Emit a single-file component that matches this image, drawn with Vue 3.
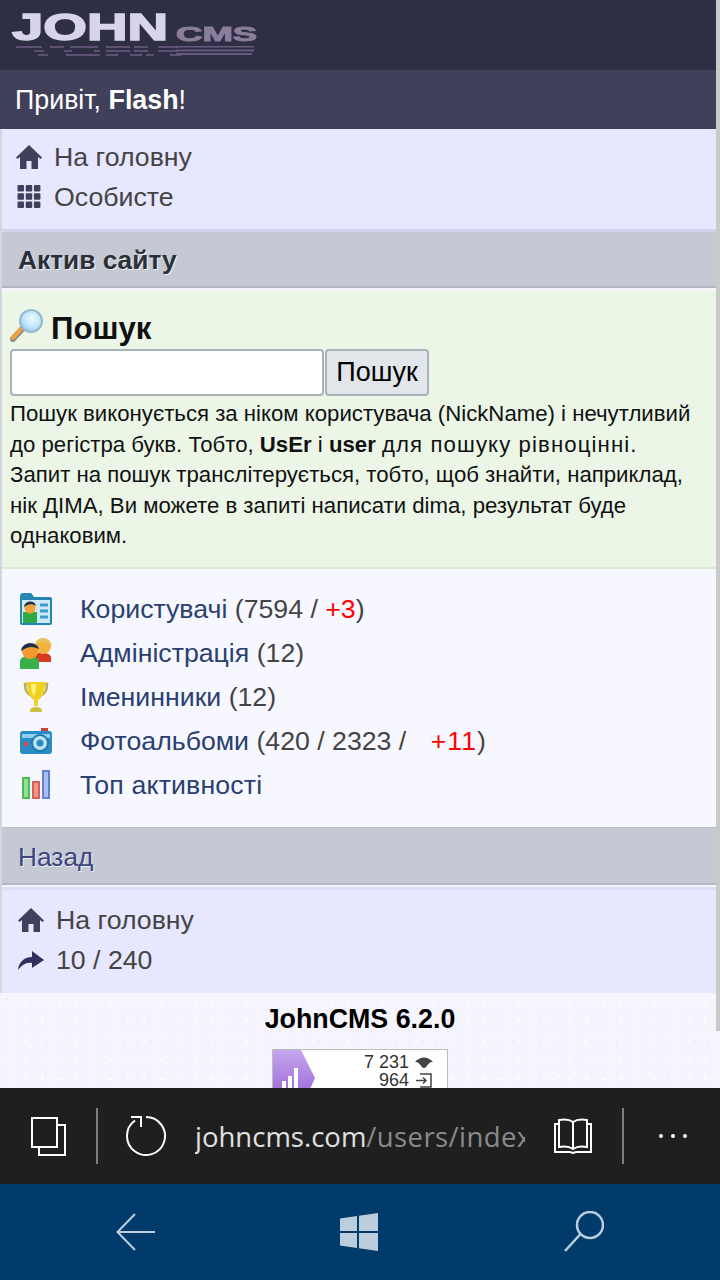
<template>
  <div class="screen">
    <div class="page">
      <div class="scroll-thumb"></div>
      <div class="logo-bar">
        <div class="logo">
          <div class="logo-words">
            <span class="logo-john">JOHN</span>
            <span class="logo-cms">CMS</span>
          </div>
          <svg class="logo-echo" width="246" height="12" viewBox="0 0 246 12">
            <g stroke="#5c5172" stroke-width="2">
              <path d="M4 1H30M38 1H52M58 1H86M94 1H118M122 1H136M146 1H166" />
              <path d="M22 5H32M52 5H60M82 5H88M94 5H118M122 5H136M146 5H166" />
              <path d="M26 9H36M54 9H88M94 9H106M118 9H130M134 9H142M158 9H170" />
            </g>
            <g stroke="#67597f" stroke-width="2">
              <path d="M164 0.500H242M164 4.500H242M164 8H240" />
            </g>
          </svg>
        </div>
      </div>
      <div class="hello">Привіт, <b>Flash</b>!</div>

      <div class="content">
        <div class="menu top-menu">
          <div class="menu-row">
            <svg class="ico" width="28" height="26" viewBox="0 0 28 26">
              <path fill="#40405a" d="M14 1 1 13.500 2.500 15 5 13V25H11.500V17H16.500V25H23V13L25.500 15 27 13.500Z" />
            </svg>
            <span>На головну</span>
          </div>
          <div class="menu-row">
            <svg class="ico" width="28" height="26" viewBox="0 0 28 26">
              <g fill="#40405a">
                <rect v-for="c in gridCells" :key="c.k" :x="c.x" :y="c.y" width="6.500" height="6.500" rx="1" />
              </g>
            </svg>
            <span>Особисте</span>
          </div>
        </div>

        <div class="title-bar"><b>Актив сайту</b></div>

        <div class="search-box">
          <div class="search-head">
            <svg class="soft lens-ico" width="34" height="34" viewBox="0 0 34 34">
              <defs>
                <radialGradient id="lens" cx="0.55" cy="0.4" r="0.7">
                  <stop offset="0" stop-color="#eefcff" />
                  <stop offset="0.6" stop-color="#b8e4fb" />
                  <stop offset="1" stop-color="#7cbce0" />
                </radialGradient>
              </defs>
              <path d="M3 31 13 20" stroke="#8a8a8a" stroke-width="6" stroke-linecap="round" />
              <path d="M3 30 11 21" stroke="#f0a040" stroke-width="4" stroke-linecap="round" />
              <circle cx="21" cy="13" r="11" fill="url(#lens)" stroke="#9ab8c8" stroke-width="2" />
            </svg>
            <b class="search-title">Пошук</b>
          </div>
          <form class="search-form" @submit.prevent>
            <input class="search-input" type="text" />
            <button class="search-btn" type="submit">Пошук</button>
          </form>
          <p class="search-help">
            Пошук виконується за ніком користувача (NickName) і нечутливий до регістра букв. Тобто, <b>UsEr</b> і <b>user</b> <span class="wide">для пошуку рівноцінні.</span><br />
            Запит на пошук транслітерується, тобто, щоб знайти, наприклад, нік ДІМА, Ви можете в запиті написати dima, результат буде однаковим.
          </p>
        </div>

        <div class="links">
          <div class="link-row">
            <svg class="soft" width="32" height="32" viewBox="0 0 32 32">
              <path fill="#2585b4" d="M0 3C0 1 1 0 3 0H11L14 4H30C31 4 32 5 32 6V30C32 31 31 32 30 32H2C1 32 0 31 0 30Z" />
              <rect x="2" y="7" width="28" height="23" fill="#cfe9f6" />
              <rect x="3" y="19" width="14" height="11" fill="#2fa846" />
              <circle cx="10" cy="15" r="5.500" fill="#f2a33a" />
              <path fill="#1e3350" d="M4 14C5 7 15 7 16 13 12 10 8 11 4 14Z" />
              <path stroke="#3f9ccc" stroke-width="3" d="M20 12H28M20 18H28M20 24H28" />
            </svg>
            <span><a class="lnk">Користувачі</a> (7594 / <span class="plus">+3</span>)</span>
          </div>
          <div class="link-row">
            <svg class="soft" width="32" height="32" viewBox="0 0 32 32">
              <path fill="#d83a20" d="M14 20C15 14 29 14 31 20V25H14Z" />
              <circle cx="23" cy="9" r="8" fill="#f2b23e" />
              <path fill="#ecc25a" d="M15 8C17 -1 29 -1 32 8 26 4 21 4 15 8Z" />
              <path fill="#36b048" d="M0 24C1 17 17 17 19 24V32H0Z" />
              <circle cx="10" cy="14" r="8" fill="#f29a2e" />
              <path fill="#1b2f55" d="M1 14C2 4 17 4 19 12 13 9 8 9 1 14Z" />
            </svg>
            <span><a class="lnk">Адміністрація</a> (12)</span>
          </div>
          <div class="link-row">
            <svg class="soft" width="32" height="32" viewBox="0 0 32 32">
              <path fill="none" stroke="#b8b060" stroke-width="2.500" d="M9 3H5C5 10 7 13 11 14M23 3H27C27 10 25 13 21 14" />
              <path fill="#f0d020" d="M7 1H25C25 11 22 17 18 19V25H14V19C10 17 7 11 7 1Z" />
              <path fill="#fff27a" d="M11 3H16C16 10 15 13 14 15 12 12 11 9 11 3Z" />
              <path fill="#d0c040" d="M10 29C11 25 21 25 22 29V31H10Z" />
            </svg>
            <span><a class="lnk">Іменинники</a> (12)</span>
          </div>
          <div class="link-row">
            <svg class="soft" width="32" height="32" viewBox="0 0 32 32">
              <rect x="21" y="3" width="7" height="4" fill="#c84040" />
              <rect x="0" y="6" width="32" height="23" rx="3" fill="#2a8cc4" />
              <rect x="2" y="9" width="28" height="4" fill="#8fd0ef" />
              <circle cx="20" cy="18" r="8" fill="#bfe4f6" stroke="#1e78aa" stroke-width="2" />
              <circle cx="20" cy="18" r="3.500" fill="#2a8cc4" />
              <rect x="4" y="17" width="4" height="4" fill="#e04848" />
            </svg>
            <span><a class="lnk">Фотоальбоми</a> (420 / 2323 / <span class="plus gap">+11</span>)</span>
          </div>
          <div class="link-row">
            <svg class="soft" width="32" height="32" viewBox="0 0 32 32">
              <rect x="3" y="9" width="6" height="20" fill="#92e092" stroke="#50b858" stroke-width="2" />
              <rect x="13" y="13" width="6" height="16" fill="#f0958a" stroke="#d86058" stroke-width="2" />
              <rect x="23" y="2" width="6" height="27" fill="#a8bef4" stroke="#6080d8" stroke-width="2" />
            </svg>
            <span class="lnk top-link">Топ активності</span>
          </div>
        </div>

        <div class="title-bar back-bar"><a class="back-link">Назад</a></div>

        <div class="menu bottom-menu">
          <div class="menu-row">
            <svg class="ico" width="28" height="26" viewBox="0 0 28 26">
              <path fill="#40405a" d="M14 1 1 13.500 2.500 15 5 13V25H11.500V17H16.500V25H23V13L25.500 15 27 13.500Z" />
            </svg>
            <span>На головну</span>
          </div>
          <div class="menu-row">
            <svg class="ico soft" width="28" height="26" viewBox="0 0 28 26">
              <path fill="#30305c" d="M1 23C2 14 8 10 15 10V4L27 13 15 21V16C9 15 5 18 1 23Z" />
            </svg>
            <span>10 / 240</span>
          </div>
        </div>
      </div>

      <div class="foot">
        <b class="foot-name">JohnCMS 6.2.0</b>
        <div class="counter">
          <svg class="counter-badge" width="44" height="39" viewBox="0 0 44 39">
            <defs>
              <linearGradient id="badge" x1="0" y1="0" x2="0" y2="1">
                <stop offset="0" stop-color="#c7a5f0" />
                <stop offset="1" stop-color="#a274da" />
              </linearGradient>
            </defs>
            <path fill="url(#badge)" d="M0 0H28L42 28 37 39H0Z" />
            <path fill="#fff" d="M9 39H13V31H9ZM15 39H19V26H15ZM21 39H25V18H21Z" />
          </svg>
          <div class="counter-nums">
            <div class="counter-row">
              <span>7 231</span>
              <svg width="18" height="12" viewBox="0 0 18 12">
                <path fill="#444" d="M0 6C5 0 13 0 18 6 13 5 12 12 9 12 6 12 5 5 0 6Z" />
              </svg>
            </div>
            <div class="counter-row">
              <span>964</span>
              <svg width="18" height="15" viewBox="0 0 18 15">
                <path fill="none" stroke="#444" stroke-width="1.500" d="M5 1H16V14H5M1 7.500H11M8 4.500 11 7.500 8 10.500" />
              </svg>
            </div>
          </div>
        </div>
      </div>
    </div>

    <div class="browser-bar">
      <svg class="tabs-ico" width="36" height="40" viewBox="0 0 36 40">
        <g fill="none" stroke="#fff" stroke-width="2">
          <rect x="2" y="2" width="25" height="29" />
          <path d="M28 9H35V39H9V32" />
        </g>
      </svg>
      <span class="divider"></span>
      <svg class="reload-ico" width="42" height="42" viewBox="0 0 42 42">
        <g fill="none" stroke="#fff" stroke-width="2">
          <path d="M21 2A19 19 0 1 1 10 5.500" />
          <path d="M6 2H16V12" />
        </g>
      </svg>
      <div class="url"><span class="host">johncms.com</span><span class="path">/users/index.php</span></div>
      <svg class="book-ico" width="38" height="36" viewBox="0 0 38 36">
        <g fill="none" stroke="#fff" stroke-width="2">
          <path d="M5 2C10 1 15 1 19 4 23 1 28 1 33 2V29C28 28 23 28 19 31 15 28 10 28 5 29Z" />
          <path d="M19 4V31" />
          <path d="M5 6H1V34H16L19 35 22 34H37V6H33" />
        </g>
      </svg>
      <span class="divider"></span>
      <div class="dots"><i></i><i></i><i></i></div>
    </div>

    <div class="nav-bar">
      <svg width="40" height="38" viewBox="0 0 40 38">
        <path fill="none" stroke="#bccddd" stroke-width="2" d="M39 19H2M19 1 1.500 19 19 37" />
      </svg>
      <svg class="win-ico" width="38" height="38" viewBox="0 0 38 38">
        <path fill="#bccddd" d="M0 5.500 17 3V18H0ZM19 2.700 38 0V18H19ZM0 20H17V35L0 32.500ZM19 20H38V38L19 35.300Z" />
      </svg>
      <svg width="41" height="42" viewBox="0 0 41 42">
        <g fill="none" stroke="#bccddd" stroke-width="2.500">
          <circle cx="27" cy="14" r="13" />
          <path d="M17.500 23 2 40" />
        </g>
      </svg>
    </div>
  </div>
</template>

<script setup>
const gridCells = [];
for (let row = 0; row < 3; row++) {
  for (let col = 0; col < 3; col++) {
    gridCells.push({ k: row + "-" + col, x: 2.5 + col * 8.2, y: 1 + row * 8.2 });
  }
}
</script>

<style>
html,
body {
  margin: 0;
  background: #f6f5fe;
}
</style>

<style scoped>
.screen {
  width: 720px;
  height: 1280px;
  display: flex;
  flex-direction: column;
  overflow: hidden;
  font-family: "Liberation Sans", Arial, sans-serif;
}

.page {
  position: relative;
  flex: 1;
  min-height: 0;
  overflow: hidden;
  background: #f6f5fe;
}

.scroll-thumb {
  position: absolute;
  top: 0;
  right: 0;
  width: 4px;
  height: 1031px;
  background: #cacaca;
  z-index: 2;
}

.soft {
  filter: blur(0.45px);
}

.logo-bar {
  height: 70px;
  box-sizing: border-box;
  padding: 13px 0 0 12px;
  background: #2e2e44;
}

.logo {
  filter: blur(0.4px);
}

.logo-words {
  display: flex;
  align-items: flex-end;
  height: 29px;
}

.logo-john {
  display: block;
  width: 164px;
  font: bold 36px/29px "Liberation Sans", sans-serif;
  color: #d8d4ee;
  transform: scaleX(1.56);
  transform-origin: left center;
  -webkit-text-stroke: 1.5px #d8d4ee;
}

.logo-cms {
  display: block;
  font: bold 21px/16px "Liberation Sans", sans-serif;
  color: #8b7e9c;
  transform: scaleX(1.74);
  transform-origin: left center;
  -webkit-text-stroke: 1px #8b7e9c;
}

.logo-echo {
  display: block;
  margin-top: 4px;
}

.hello {
  height: 59px;
  box-sizing: border-box;
  padding-left: 15px;
  background: #40405a;
  color: #fff;
  font-size: 26.8px;
  line-height: 60px;
}

.content {
  border-left: 2px solid #d3d6de;
  margin-right: 4px;
}

.menu {
  background: #e7e7ff;
  color: #444;
  font-size: 26.7px;
  box-sizing: border-box;
}

.top-menu {
  height: 103px;
  padding-top: 8px;
  border-bottom: 3px solid #d2d2ee;
}

.bottom-menu {
  height: 106px;
  padding-top: 10px;
  border-top: 3px solid #dcdcf8;
}

.menu-row {
  display: flex;
  align-items: center;
  height: 40px;
  gap: 11px;
  padding-left: 13px;
}

.bottom-menu .menu-row {
  padding-left: 15px;
  gap: 11px;
}

.title-bar {
  height: 56px;
  box-sizing: border-box;
  padding-left: 16px;
  background: #c5c9d3;
  border-bottom: 2px solid #b3b7c3;
  color: #2a3038;
  font-size: 26.3px;
  line-height: 56px;
  text-shadow: 1px 1px 0 #eef0f4;
}

.search-box {
  margin-top: 3px;
  height: 278px;
  box-sizing: border-box;
  padding: 15px 14px 0 8px;
  background: #ebf6e7;
  border-bottom: 2px solid #dcecd4;
  color: #111;
}

.search-head {
  display: flex;
  align-items: center;
  gap: 7px;
  height: 43px;
  font-size: 31.2px;
}

.lens-ico {
  margin-top: -6px;
}

.search-title {
  margin-top: 2px;
}

.search-form {
  display: flex;
  margin: 0;
}

.search-input {
  width: 314px;
  height: 47px;
  box-sizing: border-box;
  margin: 0 1px 0 0;
  border: 2px solid #a9b1bb;
  border-radius: 4px;
  background: #fff;
}

.search-btn {
  width: 104px;
  height: 47px;
  box-sizing: border-box;
  margin: 0;
  padding: 0;
  border: 2px solid #aab2bc;
  border-radius: 4px;
  background: #e2e6eb;
  color: #000;
  font: 27px "Liberation Sans", Arial, sans-serif;
}

.search-help {
  margin: 3px 0 0;
  font-size: 22.2px;
  line-height: 30.5px;
}

.wide {
  letter-spacing: 1.1px;
}

.links {
  height: 258px;
  box-sizing: border-box;
  padding-top: 18px;
  background: #f7f7ff;
  color: #444;
  font-size: 26.7px;
}

.link-row {
  display: flex;
  align-items: center;
  gap: 28px;
  height: 44px;
  padding-left: 18px;
}

.lnk {
  color: #2a4070;
}

.top-link {
  letter-spacing: 0.15px;
}

.plus {
  color: #f00;
}

.plus.gap {
  margin-left: 17px;
  letter-spacing: 1px;
}

.back-bar {
  height: 58px;
  border-top: 1px solid #b9bdc8;
  margin-bottom: 2px;
  line-height: 58px;
}

.back-link {
  color: #3a4580;
}

.foot {
  text-align: center;
  color: #000;
  padding-top: 9px;
  background-color: #f6f5fe;
  background-image: radial-gradient(#efeef9 1px, transparent 2px), radial-gradient(#fafaff 1px, transparent 2px);
  background-size: 13px 11px, 17px 19px;
}

.foot-name {
  display: block;
  font-size: 26.8px;
  line-height: 34px;
}

.counter {
  display: flex;
  justify-content: space-between;
  width: 176px;
  height: 60px;
  box-sizing: border-box;
  margin: 13px 0 0 272px;
  border: 1px solid #bdbdbd;
  background: #fff;
}

.counter-badge {
  flex: none;
}

.counter-nums {
  padding: 3px 14px 0 0;
  font-size: 18px;
  line-height: 18px;
  color: #333;
}

.counter-row {
  display: flex;
  justify-content: flex-end;
  align-items: center;
  gap: 6px;
}

.browser-bar {
  flex: none;
  height: 96px;
  display: flex;
  align-items: center;
  background: #1f1f1f;
}

.tabs-ico {
  margin: 0 0 0 30px;
}

.divider {
  flex: none;
  width: 2px;
  height: 56px;
  background: #7f7f7f;
}

.browser-bar .tabs-ico + .divider {
  margin-left: 30px;
}

.reload-ico {
  margin-left: 27px;
}

.url {
  width: 330px;
  margin-left: 28px;
  overflow: hidden;
  white-space: nowrap;
  font: 27.5px "Open Sans", sans-serif;
}

.host {
  color: #e0e0e0;
}

.path {
  color: #8a8a8a;
  letter-spacing: 0.4px;
}

.book-ico {
  margin-left: 29px;
}

.book-ico + .divider {
  margin-left: 30px;
}

.dots {
  display: flex;
  gap: 8px;
  margin-left: 35px;
}

.dots i {
  width: 4px;
  height: 4px;
  border-radius: 50%;
  background: #fff;
}

.nav-bar {
  flex: none;
  height: 96px;
  box-sizing: border-box;
  padding: 0 116px;
  display: flex;
  justify-content: space-between;
  align-items: center;
  background: #003b6c;
}

.win-ico {
  margin-left: -2px;
}
</style>
